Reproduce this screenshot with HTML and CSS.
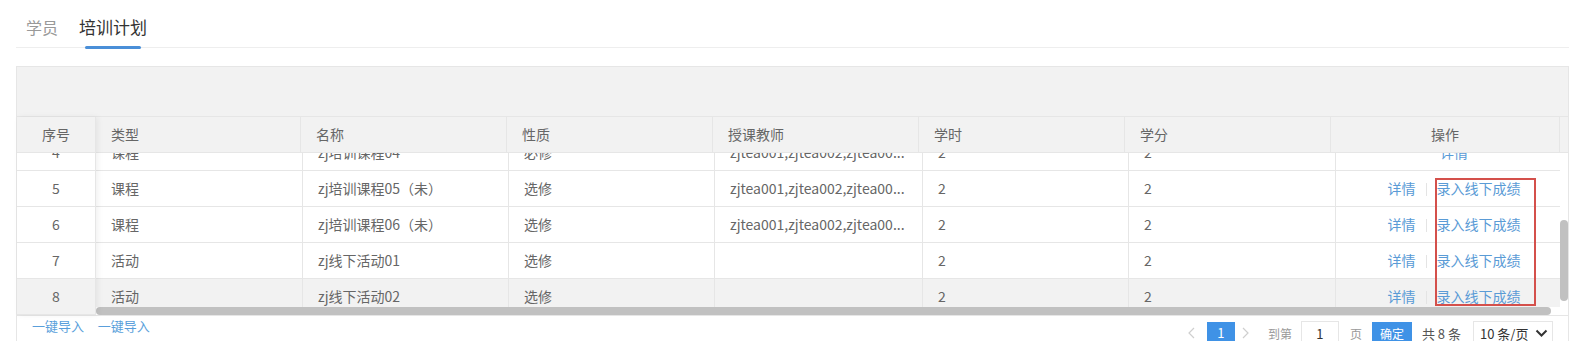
FILE: index.html
```html
<!DOCTYPE html>
<html>
<head>
    <meta charset="utf-8">
    <link rel="stylesheet" href="styles.css">
</head>
<body>
<div class="page">
    <div class="tabs">
        <span class="tab">学员</span>
        <span class="tab active">培训计划</span>
    </div>

    <div class="grid">
        <div class="toolbar"></div>

        <div class="table-box">
            <div class="fixed-l">
                <div class="th-row"><div class="th c-no">序号</div></div>
                <div class="fixed-body" id="fixedBody">
                    <div class="tr"><div class="td c-no">1</div></div>
                    <div class="tr"><div class="td c-no">2</div></div>
                    <div class="tr"><div class="td c-no">3</div></div>
                    <div class="tr"><div class="td c-no">4</div></div>
                    <div class="tr"><div class="td c-no">5</div></div>
                    <div class="tr"><div class="td c-no">6</div></div>
                    <div class="tr"><div class="td c-no">7</div></div>
                    <div class="tr hover"><div class="td c-no">8</div></div>
                </div>
            </div>

            <div class="main">
                <div class="thead">
                    <div class="th-row">
                        <div class="th c-type">类型</div>
                        <div class="th c-name">名称</div>
                        <div class="th c-kind">性质</div>
                        <div class="th c-teacher">授课教师</div>
                        <div class="th c-hour">学时</div>
                        <div class="th c-credit">学分</div>
                        <div class="th c-op">操作</div>
                        <div class="th gutter"></div>
                    </div>
                </div>
                <div class="body-wrap">
                    <div class="body-col">
                        <div class="tbody" id="mainBody">
                            <div class="tr">
                                <div class="td c-type">课程</div>
                                <div class="td c-name">zj培训课程01</div>
                                <div class="td c-kind">必修</div>
                                <div class="td c-teacher">zjtea001,zjtea002,zjtea00...</div>
                                <div class="td c-hour">2</div>
                                <div class="td c-credit">2</div>
                                <div class="td c-op"><a class="link">详情</a></div>
                            </div>
                            <div class="tr">
                                <div class="td c-type">课程</div>
                                <div class="td c-name">zj培训课程02</div>
                                <div class="td c-kind">必修</div>
                                <div class="td c-teacher">zjtea001,zjtea002,zjtea00...</div>
                                <div class="td c-hour">2</div>
                                <div class="td c-credit">2</div>
                                <div class="td c-op"><a class="link">详情</a></div>
                            </div>
                            <div class="tr">
                                <div class="td c-type">课程</div>
                                <div class="td c-name">zj培训课程03</div>
                                <div class="td c-kind">必修</div>
                                <div class="td c-teacher">zjtea001,zjtea002,zjtea00...</div>
                                <div class="td c-hour">2</div>
                                <div class="td c-credit">2</div>
                                <div class="td c-op"><a class="link">详情</a></div>
                            </div>
                            <div class="tr">
                                <div class="td c-type">课程</div>
                                <div class="td c-name">zj培训课程04</div>
                                <div class="td c-kind">必修</div>
                                <div class="td c-teacher">zjtea001,zjtea002,zjtea00...</div>
                                <div class="td c-hour">2</div>
                                <div class="td c-credit">2</div>
                                <div class="td c-op"><a class="link">详情</a></div>
                            </div>
                            <div class="tr">
                                <div class="td c-type">课程</div>
                                <div class="td c-name">zj培训课程05（未）</div>
                                <div class="td c-kind">选修</div>
                                <div class="td c-teacher">zjtea001,zjtea002,zjtea00...</div>
                                <div class="td c-hour">2</div>
                                <div class="td c-credit">2</div>
                                <div class="td c-op"><a class="link">详情</a><span class="divider"></span><a class="link">录入线下成绩</a></div>
                            </div>
                            <div class="tr">
                                <div class="td c-type">课程</div>
                                <div class="td c-name">zj培训课程06（未）</div>
                                <div class="td c-kind">选修</div>
                                <div class="td c-teacher">zjtea001,zjtea002,zjtea00...</div>
                                <div class="td c-hour">2</div>
                                <div class="td c-credit">2</div>
                                <div class="td c-op"><a class="link">详情</a><span class="divider"></span><a class="link">录入线下成绩</a></div>
                            </div>
                            <div class="tr">
                                <div class="td c-type">活动</div>
                                <div class="td c-name">zj线下活动01</div>
                                <div class="td c-kind">选修</div>
                                <div class="td c-teacher"></div>
                                <div class="td c-hour">2</div>
                                <div class="td c-credit">2</div>
                                <div class="td c-op"><a class="link">详情</a><span class="divider"></span><a class="link">录入线下成绩</a></div>
                            </div>
                            <div class="tr hover">
                                <div class="td c-type">活动</div>
                                <div class="td c-name">zj线下活动02</div>
                                <div class="td c-kind">选修</div>
                                <div class="td c-teacher"></div>
                                <div class="td c-hour">2</div>
                                <div class="td c-credit">2</div>
                                <div class="td c-op"><a class="link">详情</a><span class="divider"></span><a class="link">录入线下成绩</a></div>
                            </div>
                        </div>
                        <div class="hbar"><div class="hthumb"></div></div>
                    </div>
                    <div class="vbar"><div class="vthumb"></div></div>
                </div>
            </div>
        </div>

        <div class="pager">
            <div class="pager-links">
                <a class="plink">一键导入</a>
                <a class="plink">一键导入</a>
            </div>
            <div class="pages">
                <span class="pg-arrow prev"><svg width="7" height="12" viewBox="0 0 7 12"><path d="M6 1 L1 6 L6 11" fill="none" stroke="#cfcfcf" stroke-width="1.2"/></svg></span>
                <span class="pg-cur">1</span>
                <span class="pg-arrow next"><svg width="7" height="12" viewBox="0 0 7 12"><path d="M1 1 L6 6 L1 11" fill="none" stroke="#cfcfcf" stroke-width="1.2"/></svg></span>
                <span class="pg-text skip">到第</span>
                <input class="pg-input" value="1">
                <span class="pg-text page-unit">页</span>
                <button class="pg-btn">确定</button>
                <span class="pg-count">共 8 条</span>
                <div class="pg-limit">
                    <span>10 条/页</span>
                    <svg width="13" height="9" viewBox="0 0 13 9"><path d="M1.5 1.5 L6.5 6.5 L11.5 1.5" fill="none" stroke="#333" stroke-width="2"/></svg>
                </div>
            </div>
        </div>
    </div>

    <div class="mark"></div>
</div>

<script src="app.js"></script>
</body>
</html>
```

FILE: styles.css
```css
html, body {
    margin: 0;
    overflow: hidden;
}

body {
    font-family: "Noto Sans CJK SC", "Microsoft YaHei", sans-serif;
    font-size: 14px;
    color: #666;
    background: #fff;
}

.page {
    position: relative;
    padding: 0 9px 0 16px;
}

/* tabs */
.tabs {
    display: flex;
    height: 47px;
    padding-left: 10px;
    border-bottom: 1px solid #eee;
    margin-bottom: 18px;
}

.tab {
    position: relative;
    padding-top: 7px;
    line-height: 40px;
    font-size: 16px;
    color: #999;
    margin-right: 21px;
}

.tab.active {
    font-size: 17px;
    color: #333;
}

.tab.active::after {
    content: "";
    position: absolute;
    left: 6px;
    right: 6px;
    bottom: -2px;
    height: 3px;
    border-radius: 2px;
    background: #4a8fd8;
}

/* grid */
.grid {
    border: 1px solid #e6e6e6;
}

.toolbar {
    height: 49px;
    background: #f2f2f2;
    border-bottom: 1px solid #e6e6e6;
}

.table-box {
    display: flex;
}

.th-row,
.tr {
    display: flex;
}

.th,
.td {
    flex: none;
    box-sizing: border-box;
    height: 36px;
    line-height: 35px;
    padding: 0 15px;
    white-space: nowrap;
    overflow: hidden;
    text-overflow: ellipsis;
    border-right: 1px solid #e6e6e6;
    border-bottom: 1px solid #e6e6e6;
}

.th {
    background: #f2f2f2;
}

.tr.hover .td {
    background: #f2f2f2;
}

.c-no {
    width: 79px;
    text-align: center;
}

.c-op {
    text-align: center;
}

.fixed-l {
    flex: none;
    width: 79px;
    position: relative;
    z-index: 1;
    background: #fff;
    box-shadow: 2px 0 6px rgba(0, 0, 0, 0.06);
}

.fixed-body {
    height: 162px;
    overflow: hidden;
}

.main {
    flex: 1;
    min-width: 0;
}

.thead {
    overflow: hidden;
}

.thead .c-type { width: 205px; }
.thead .c-name { width: 206px; }
.thead .c-kind { width: 206px; }
.thead .c-teacher { width: 206px; }
.thead .c-hour { width: 206px; }
.thead .c-credit { width: 206px; }
.thead .c-op { width: 229px; }

.thead .gutter {
    width: 8px;
    padding: 0;
    border-right: none;
}

.body-wrap {
    display: flex;
}

.body-col {
    flex: 1;
    min-width: 0;
}

.tbody {
    height: 154px;
    overflow: hidden;
}

.tbody .c-type { width: 207px; }
.tbody .c-name { width: 206px; }
.tbody .c-kind { width: 206px; }
.tbody .c-teacher { width: 208px; }
.tbody .c-hour { width: 206px; }
.tbody .c-credit { width: 207px; }
.tbody .c-op { width: 237px; }

/* scrollbars drawn by hand */
.hbar {
    height: 8px;
}

.hthumb {
    width: 1455px;
    height: 8px;
    border-radius: 4px;
    background: #c1c1c1;
}

.vbar {
    flex: none;
    width: 8px;
    height: 162px;
}

.vthumb {
    margin-top: 67px;
    height: 81px;
    border-radius: 4px;
    background: #c1c1c1;
}

.link {
    color: #5a9bd6;
    cursor: pointer;
}

.divider {
    display: inline-block;
    width: 1px;
    height: 13px;
    margin: 0 10px;
    background: #e4e4e4;
    vertical-align: -2px;
}

/* pager */
.pager {
    display: flex;
    justify-content: space-between;
    align-items: flex-start;
    height: 40px;
    padding: 0 15px;
    border-top: 1px solid #e6e6e6;
    font-size: 12px;
}

.plink {
    font-size: 13px;
    line-height: 20px;
    color: #5a9fdb;
    margin-right: 11px;
    cursor: pointer;
}

.pages {
    display: flex;
    align-items: center;
    margin-top: 6px;
    height: 22px;
}

.pg-arrow {
    display: flex;
    width: 7px;
}

.pg-arrow.prev { margin-right: 12px; }
.pg-arrow.next { margin-right: 19px; }

.pg-cur {
    width: 28px;
    height: 22px;
    line-height: 22px;
    text-align: center;
    background: #3f92e6;
    color: #fff;
    font-size: 13px;
    margin-right: 7px;
}

.pg-text {
    color: #999;
}

.skip { margin-right: 9px; }
.page-unit { margin-right: 10px; }

.pg-input {
    box-sizing: border-box;
    width: 38px;
    height: 24px;
    border: 1px solid #e6e6e6;
    padding: 0;
    text-align: center;
    font-family: inherit;
    font-size: 13px;
    color: #333;
    margin-right: 11px;
}

.pg-btn {
    width: 40px;
    height: 22px;
    border: none;
    padding: 0;
    background: #3f92e6;
    color: #fff;
    font-family: inherit;
    font-size: 12px;
    margin-right: 10px;
}

.pg-count {
    color: #555;
    font-size: 13px;
    margin-right: 12px;
}

.pg-limit {
    box-sizing: border-box;
    display: flex;
    align-items: center;
    justify-content: space-between;
    width: 80px;
    height: 24px;
    padding: 0 4px 0 6px;
    border: 1px solid #e6e6e6;
    color: #333;
    font-size: 13px;
}

/* annotation box */
.mark {
    position: absolute;
    left: 1435px;
    top: 178px;
    width: 101px;
    height: 128px;
    box-sizing: border-box;
    border: 2px solid #d4504b;
}
```

FILE: app.js
```js
var rowOffset = 126;
document.getElementById('mainBody').scrollTop = rowOffset;
document.getElementById('fixedBody').scrollTop = rowOffset;
```
